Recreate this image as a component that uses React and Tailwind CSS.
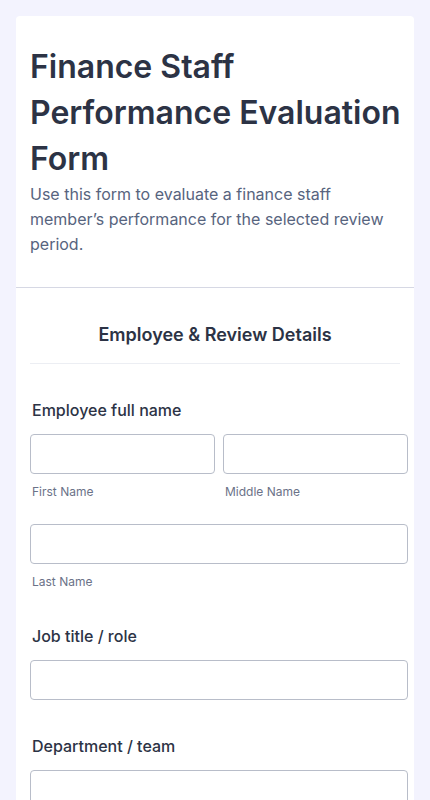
import React from 'react';

const font = { fontFamily: 'Inter, "Noto Sans", sans-serif' };

function Field({ label, children, className = '' }) {
    return (
        <div className={className}>
            <div className="pl-[2px] text-[16px] leading-[24px] font-medium text-[#2c3345]">{label}</div>
            <div className="mt-[12px]">{children}</div>
        </div>
    );
}

function TextInput() {
    return <input type="text" className="block w-full h-[40px] rounded-[4px] border border-[#b8bdc9] bg-white px-3 outline-none" />;
}

function SubLabel({ children }) {
    return <div className="mt-[10px] pl-[2px] text-[12px] leading-[16px] text-[#6b7288]">{children}</div>;
}

export default function App() {
    return (
        <div className="min-h-[800px] bg-[#f3f3fe] pt-[16px] px-[16px]" style={font}>
            <div className="bg-white rounded-t-[4px]">
                <header className="pl-[14px] pr-[6px] pt-[28px] pb-[30px] border-b border-[#d6d8e4]">
                    <h1 className="text-[32px] leading-[46px] font-semibold text-[#2c3345]">
                        Finance Staff Performance Evaluation Form
                    </h1>
                    <p className="pr-[8px] text-[16px] leading-[25px] text-[#57647e]">
                        Use this form to evaluate a finance staff member’s performance for the selected review period.
                    </p>
                </header>

                <section className="pl-[14px] pr-[6px] pt-[35px] pb-10">
                    <div className="mr-[8px] pb-[16px] border-b border-[#eceef3]">
                        <h2 className="text-center text-[18px] leading-[24px] font-semibold text-[#2c3345]">
                            Employee &amp; Review Details
                        </h2>
                    </div>

                    <Field label="Employee full name" className="mt-[34px]">
                        <div className="grid grid-cols-2 gap-[8px]">
                            <div>
                                <TextInput />
                                <SubLabel>First Name</SubLabel>
                            </div>
                            <div>
                                <TextInput />
                                <SubLabel>Middle Name</SubLabel>
                            </div>
                        </div>
                        <div className="mt-[24px]">
                            <TextInput />
                            <SubLabel>Last Name</SubLabel>
                        </div>
                    </Field>

                    <Field label="Job title / role" className="mt-[34px]">
                        <TextInput />
                    </Field>

                    <Field label="Department / team" className="mt-[34px]">
                        <TextInput />
                    </Field>
                </section>
            </div>
        </div>
    );
}
